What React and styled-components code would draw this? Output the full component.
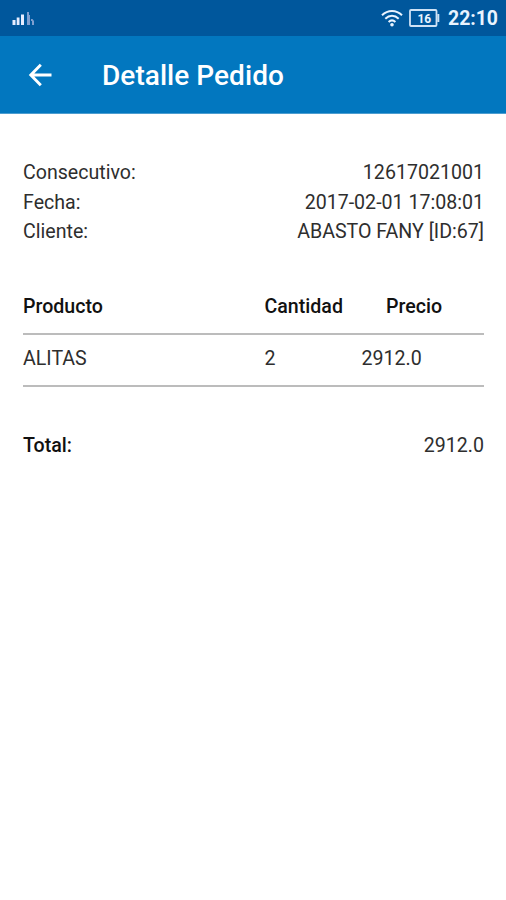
import styled, { createGlobalStyle } from "styled-components";

const GlobalStyle = createGlobalStyle`
  * {
    box-sizing: border-box;
  }

  body {
    margin: 0;
    background-color: #fff;
    color: #111;
    font-family: Roboto, sans-serif;
  }
`;

const Screen = styled.div`
  width: 506px;
  height: 900px;
  overflow: hidden;
  background-color: #fff;
`;

const StatusBar = styled.div`
  height: 36px;
  padding: 0 8px 0 12px;
  display: flex;
  align-items: center;
  justify-content: space-between;
  background-color: #00579c;
  color: #eaf4ff;
`;

const StatusIcons = styled.div`
  display: flex;
  align-items: center;
  gap: 6px;
`;

const Clock = styled.span`
  margin-left: 2px;
  font-size: 19.4px;
  font-weight: 700;
  line-height: 34px;
  padding-top: 2px;
`;

const AppBar = styled.header`
  height: 78px;
  padding: 0 28px;
  display: flex;
  align-items: center;
  gap: 50px;
  background-color: #0277bf;
  border-bottom: 1px solid #4c9dd0;
  color: #fff;
`;

const BackButton = styled.button`
  width: 24px;
  height: 24px;
  padding: 0;
  border: none;
  background: none;
  color: inherit;
`;

const Title = styled.h1`
  margin: 0;
  padding-top: 2px;
  font-size: 28px;
  font-weight: 500;
  line-height: 36px;
  letter-spacing: 0.05px;
`;

const Content = styled.main`
  padding: 44px 22px 0 23px;
  font-size: 19.6px;
  line-height: 29.5px;
`;

const InfoRow = styled.div`
  display: flex;
  justify-content: space-between;
  color: #2e2e2e;
`;

const Label = styled.span`
  font-weight: ${(props) => (props.$bold ? 500 : 400)};
  color: ${(props) => (props.$bold ? "#111" : "inherit")};
`;

const Table = styled.section`
  margin: 45px 0 44.5px;
`;

const TableRow = styled.div`
  display: grid;
  grid-template-columns: 241.5px 97px 1fr;
  border-bottom: 2px solid #bcbcbc;
`;

const HeaderRow = styled(TableRow)`
  padding-bottom: 11.5px;
  grid-template-columns: 241.5px 121.5px 1fr;
  font-weight: 500;
`;

const ItemRow = styled(TableRow)`
  padding: 9.5px 0 11px;
  color: #2e2e2e;
`;

const order = {
  info: [
    { label: "Consecutivo:", value: "12617021001" },
    { label: "Fecha:", value: "2017-02-01 17:08:01" },
    { label: "Cliente:", value: "ABASTO FANY [ID:67]" },
  ],
  items: [{ name: "ALITAS", quantity: 2, price: "2912.0" }],
  total: "2912.0",
};

function SignalIcon() {
  return (
    <svg width="23" height="16" viewBox="0 0 23 16">
      <path d="M.5 10h3v5h-3zM4.7 7.5h2.8V15H4.7zM9 4.5h3V15H9z" fill="#e6edff" />
      <path d="M15 2h2v13h-2zM17 5h1v10h-1zM19 9h1.5l1.5 2v4h-2v-4h-1z" fill="#7f9fd0" />
    </svg>
  );
}

function WifiIcon() {
  return (
    <svg width="22" height="18" viewBox="0 0 22 18" fill="none" stroke="currentColor" strokeWidth="2">
      <path d="M1 6.2C6.8.5 15.2.5 21 6.2M4.3 9.7c4-3.8 9.4-3.8 13.4 0M7.6 13c2-1.9 4.8-1.9 6.8 0" />
      <circle cx="11" cy="15.7" r="1.8" fill="currentColor" stroke="none" />
    </svg>
  );
}

function BatteryIcon() {
  return (
    <svg width="31" height="18" viewBox="0 0 31 18" fill="none" stroke="#cfe2f5">
      <rect x="1" y="1" width="26.5" height="16" rx="1" strokeWidth="1.8" />
      <path d="M29.3 5v8" strokeWidth="2" />
      <text
        x="15.3"
        y="13.6"
        textAnchor="middle"
        fill="currentColor"
        stroke="none"
        fontSize="12"
        fontWeight="700"
      >
        16
      </text>
    </svg>
  );
}

function BackIcon() {
  return (
    <svg width="24" height="24" viewBox="0 0 24 24" fill="none" stroke="currentColor" strokeWidth="2.9">
      <path d="M12.8 1.7 2.8 12l10 10.3M2.8 12H23.5" />
    </svg>
  );
}

function App() {
  return (
    <>
      <GlobalStyle />
      <Screen>
        <StatusBar>
          <SignalIcon />
          <StatusIcons>
            <WifiIcon />
            <BatteryIcon />
            <Clock>22:10</Clock>
          </StatusIcons>
        </StatusBar>

        <AppBar>
          <BackButton aria-label="Volver">
            <BackIcon />
          </BackButton>
          <Title>Detalle Pedido</Title>
        </AppBar>

        <Content>
          {order.info.map(({ label, value }) => (
            <InfoRow key={label}>
              <Label>{label}</Label>
              <span>{value}</span>
            </InfoRow>
          ))}

          <Table>
            <HeaderRow>
              <span>Producto</span>
              <span>Cantidad</span>
              <span>Precio</span>
            </HeaderRow>
            {order.items.map(({ name, quantity, price }) => (
              <ItemRow key={name}>
                <span>{name}</span>
                <span>{quantity}</span>
                <span>{price}</span>
              </ItemRow>
            ))}
          </Table>

          <InfoRow>
            <Label $bold>Total:</Label>
            <span>{order.total}</span>
          </InfoRow>
        </Content>
      </Screen>
    </>
  );
}

export default App;
